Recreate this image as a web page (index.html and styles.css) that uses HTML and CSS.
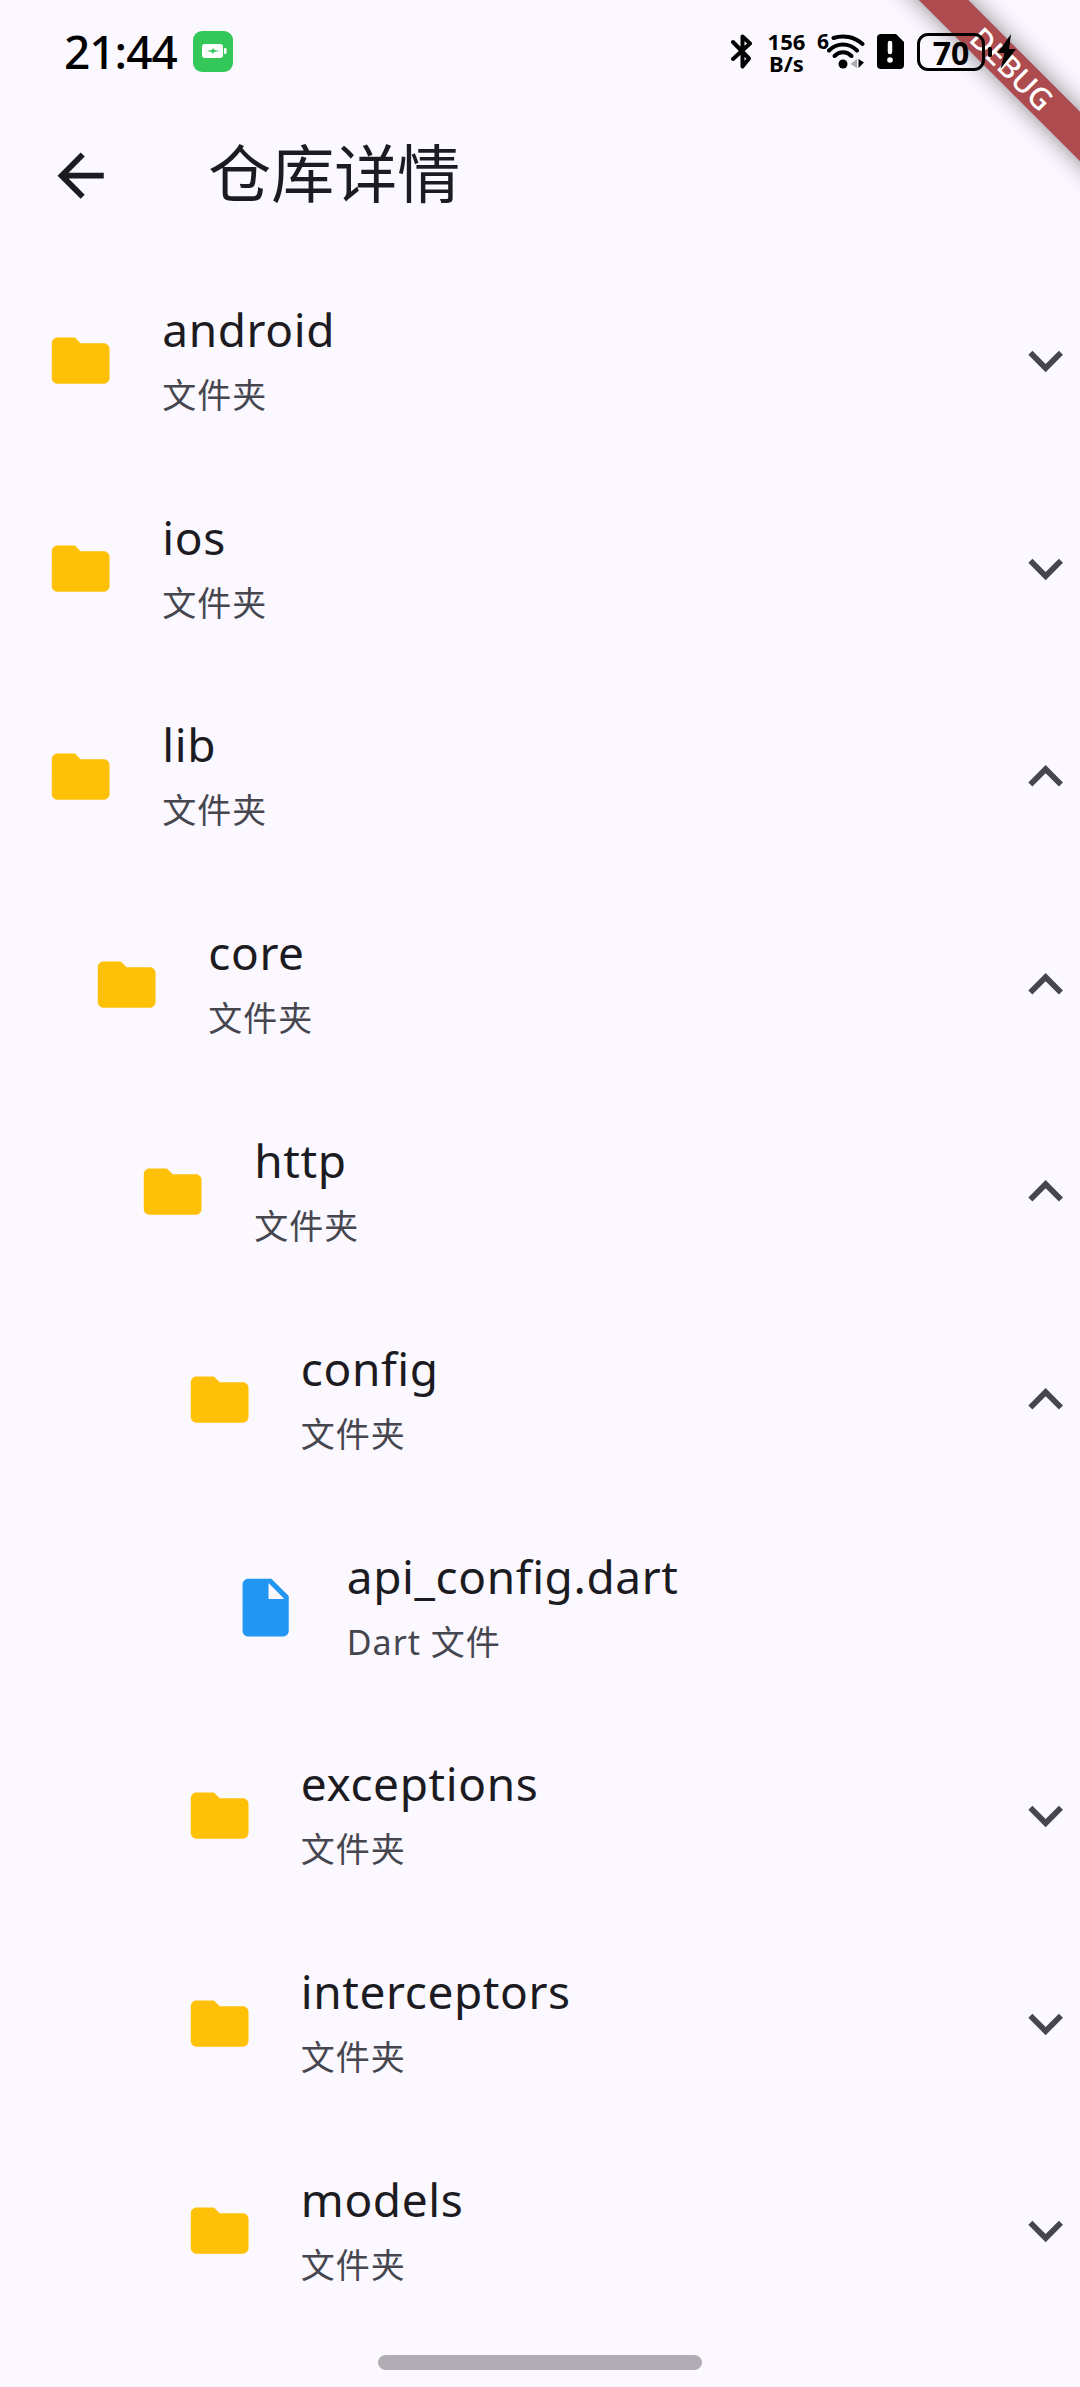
FILE: index.html
```html
<!DOCTYPE html>
<html lang="zh-CN">
<head>
    <meta charset="UTF-8">
    <meta name="viewport" content="width=device-width, initial-scale=1.0">
    <title>仓库详情</title>
    <link rel="stylesheet" href="styles.css">
</head>
<body>

    <!-- shared icons -->
    <svg class="sprite">
        <symbol id="folder" viewBox="0 0 24 24"><path d="M10 4H4c-1.1 0-1.99.9-1.99 2L2 18c0 1.1.9 2 2 2h16c1.1 0 2-.9 2-2V8c0-1.1-.9-2-2-2h-8l-2-2z"/></symbol>
        <symbol id="file" viewBox="0 0 24 24"><path d="M6 2c-1.1 0-1.99.9-1.99 2L4 20c0 1.1.89 2 1.99 2H18c1.1 0 2-.9 2-2V8l-6-6H6zm7 7V3.5L18.5 9H13z"/></symbol>
        <symbol id="more" viewBox="0 0 24 24"><path d="M16.59 8.59L12 13.17 7.41 8.59 6 10l6 6 6-6z"/></symbol>
        <symbol id="less" viewBox="0 0 24 24"><path d="M12 8l-6 6 1.41 1.41L12 10.83l4.59 4.58L18 14z"/></symbol>
    </svg>

    <div class="debug-banner"><span>DEBUG</span></div>

    <div class="status-bar">
        <span class="time">21:44</span>
        <svg class="charge-app" viewBox="0 0 40 41">
            <rect width="40" height="41" rx="9" fill="#34c759"/>
            <rect x="9" y="13" width="21" height="14" rx="3" fill="#fff"/>
            <rect x="31" y="17" width="2.5" height="6" rx="1" fill="#fff"/>
            <path d="M13.5 20l5.500-1 1-2 1.500 2 5 1-5.500 1-1 2-1.500-2z" fill="#34c759"/>
        </svg>
        <div class="status-icons">
            <svg class="bluetooth" viewBox="0 0 22 35">
                <path d="M2 8l16 16.500-6.500 8V2.500L19 9.500 2 25" fill="none" stroke="#000" stroke-width="4" stroke-linejoin="round" stroke-linecap="round"/>
            </svg>
            <div class="net-speed"><span>156</span><span>B/s</span></div>
            <div class="wifi">
                <span>6</span>
                <svg viewBox="0 0 38 36">
                    <g fill="none" stroke="#000" stroke-width="4" stroke-linecap="round">
                        <path d="M6.500 4c10-3.500 21-1 29 6"/>
                        <path d="M2 16.500c8-8 20-8 28 0"/>
                        <path d="M7.500 22c5-5 12-5 17 0"/>
                    </g>
                    <circle cx="16" cy="30" r="4.500"/>
                    <path d="M30 25v9l-6.500-4z" fill="#aaa"/>
                    <path d="M31.500 25v9l5.500-5.500z"/>
                </svg>
            </div>
            <svg class="sim" viewBox="0 0 27 35">
                <path d="M4 0h15l8 8v23a4 4 0 0 1-4 4H4a4 4 0 0 1-4-4V4a4 4 0 0 1 4-4z"/>
                <path d="M13 9v9" stroke="#fff" stroke-width="4.500" stroke-linecap="round"/>
                <circle cx="13" cy="26" r="2.800" fill="#fff"/>
            </svg>
            <div class="battery">70</div>
            <svg class="bolt" viewBox="0 0 28 35">
                <rect x="0" y="13" width="4" height="10" rx="1.500"/>
                <path d="M23 0L9.500 19h7l-4 16L28 15h-7z"/>
            </svg>
        </div>
    </div>

    <div class="app-bar">
        <svg class="icon" viewBox="0 0 24 24"><path d="M20 11H7.830l5.590-5.590L12 4l-8 8 8 8 1.410-1.410L7.830 13H20v-2z"/></svg>
        <h1>仓库详情</h1>
    </div>

    <div class="tree">
        <div class="row">
            <svg class="icon folder"><use href="#folder"/></svg>
            <div class="label"><h2>android</h2><p>文件夹</p></div>
            <svg class="icon arrow"><use href="#more"/></svg>
        </div>
        <div class="row">
            <svg class="icon folder"><use href="#folder"/></svg>
            <div class="label"><h2>ios</h2><p>文件夹</p></div>
            <svg class="icon arrow"><use href="#more"/></svg>
        </div>
        <div class="row">
            <svg class="icon folder"><use href="#folder"/></svg>
            <div class="label"><h2>lib</h2><p>文件夹</p></div>
            <svg class="icon arrow"><use href="#less"/></svg>
        </div>
        <div class="row level-1">
            <svg class="icon folder"><use href="#folder"/></svg>
            <div class="label"><h2>core</h2><p>文件夹</p></div>
            <svg class="icon arrow"><use href="#less"/></svg>
        </div>
        <div class="row level-2">
            <svg class="icon folder"><use href="#folder"/></svg>
            <div class="label"><h2>http</h2><p>文件夹</p></div>
            <svg class="icon arrow"><use href="#less"/></svg>
        </div>
        <div class="row level-3">
            <svg class="icon folder"><use href="#folder"/></svg>
            <div class="label"><h2>config</h2><p>文件夹</p></div>
            <svg class="icon arrow"><use href="#less"/></svg>
        </div>
        <div class="row level-4">
            <svg class="icon file"><use href="#file"/></svg>
            <div class="label"><h2>api_config.dart</h2><p>Dart 文件</p></div>
        </div>
        <div class="row level-3">
            <svg class="icon folder"><use href="#folder"/></svg>
            <div class="label"><h2>exceptions</h2><p>文件夹</p></div>
            <svg class="icon arrow"><use href="#more"/></svg>
        </div>
        <div class="row level-3">
            <svg class="icon folder"><use href="#folder"/></svg>
            <div class="label"><h2>interceptors</h2><p>文件夹</p></div>
            <svg class="icon arrow"><use href="#more"/></svg>
        </div>
        <div class="row level-3">
            <svg class="icon folder"><use href="#folder"/></svg>
            <div class="label"><h2>models</h2><p>文件夹</p></div>
            <svg class="icon arrow"><use href="#more"/></svg>
        </div>
    </div>

    <div class="home-bar"></div>

</body>
</html>
```
FILE: styles.css
```css
* {
    box-sizing: border-box;
    margin: 0;
    padding: 0;
}

body {
    position: relative;
    width: 1080px;
    height: 2387px;
    overflow: hidden;
    background-color: #fbf8ff;
    color: #1b1b21;
    font-family: "Noto Sans", "Noto Sans CJK SC", sans-serif;
}

.sprite {
    display: none;
}

.icon {
    width: 69.3px;
    height: 69.3px;
    flex: none;
    fill: #1b1b21;
}

/* Status bar */
.status-bar {
    position: relative;
    z-index: 2;
    display: flex;
    align-items: center;
    height: 95px;
    padding: 8px 64px 0 64px;
    color: #000;
}
.time {
    width: 129px;
    font-size: 46px;
    font-weight: 500;
    line-height: 50px;
    letter-spacing: -1px;
    margin-top: -2px;
}
.charge-app {
    width: 40px;
    height: 41px;
}
.status-icons {
    display: flex;
    align-items: center;
    margin-left: auto;
}
.bluetooth {
    width: 22px;
    height: 35px;
}
.net-speed {
    display: flex;
    flex-direction: column;
    width: 43px;
    margin-left: 12px;
    font-size: 22px;
    font-weight: 700;
    line-height: 22px;
    text-align: center;
}
.wifi {
    display: flex;
    margin-left: 9px;
    font-size: 21px;
    font-weight: 700;
    line-height: 14px;
}
.wifi span {
    width: 10px;
}
.wifi svg {
    width: 38px;
    height: 36px;
}
.sim {
    width: 27px;
    height: 35px;
    margin-left: 12px;
}
.battery {
    width: 68px;
    height: 38px;
    margin-left: 13px;
    border: 3px solid #000;
    border-radius: 11px;
    font-size: 32px;
    font-weight: 700;
    line-height: 33px;
    text-align: center;
}
.bolt {
    width: 28px;
    height: 35px;
    margin-left: 3px;
}

/* Debug ribbon */
.debug-banner {
    position: absolute;
    z-index: 1;
    top: 51px;
    left: 862px;
    width: 300px;
    height: 35.4px;
    background-color: #ad4b4f;
    box-shadow: 0 0 24px rgba(0, 0, 0, 0.45);
    color: #fff;
    font-size: 30px;
    font-weight: 500;
    line-height: 35px;
    text-align: center;
    transform: rotate(45deg);
}

/* App bar */
.app-bar {
    display: flex;
    align-items: center;
    height: 162px;
    padding-left: 46px;
}
.app-bar h1 {
    margin: -7px 0 0 93px;
    font-size: 63px;
    font-weight: 400;
    line-height: 80px;
}

/* Tree */
.row {
    display: flex;
    align-items: center;
    height: 207.8px;
    padding-left: 46px;
}
.level-1 {
    padding-left: 92px;
}
.level-2 {
    padding-left: 138px;
}
.level-3 {
    padding-left: 184.5px;
}
.level-4 {
    padding-left: 230.5px;
}
.folder {
    fill: #ffc107;
}
.file {
    fill: #2196f3;
}
.arrow {
    margin-left: auto;
    fill: #46464f;
}
.label {
    margin-left: 47px;
}
.label h2 {
    margin: -3px 0 3px;
    font-size: 46px;
    font-weight: 400;
    line-height: 68px;
    letter-spacing: 0.6px;
}
.label p {
    color: #46464f;
    font-size: 34px;
    line-height: 58px;
    letter-spacing: 1px;
}

.home-bar {
    width: 324px;
    height: 15px;
    margin: 20px auto 0;
    border-radius: 8px;
    background-color: #b0adb4;
}
```
